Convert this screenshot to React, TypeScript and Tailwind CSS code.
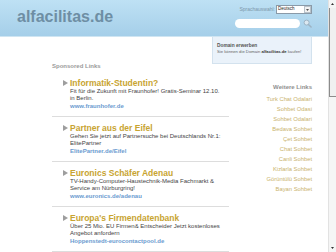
import React from "react";

const entries = [
  {
    title: "Informatik-Studentin?",
    lines: ["Fit für die Zukunft mit Fraunhofer! Gratis-Seminar 12.10.", "in Berlin."],
    url: "www.fraunhofer.de",
  },
  {
    title: "Partner aus der Eifel",
    lines: ["Gehen Sie jetzt auf Partnersuche bei Deutschlands Nr.1:", "ElitePartner"],
    url: "ElitePartner.de/Eifel",
  },
  {
    title: "Euronics Schäfer Adenau",
    lines: ["TV-Handy-Computer-Haustechnik-Media Fachmarkt &", "Service am Nürburgring!"],
    url: "www.euronics.de/adenau",
  },
  {
    title: "Europa's Firmendatenbank",
    lines: ["Über 25 Mio. EU Firmen& Entscheider Jetzt kostenloses", "Angebot anfordern"],
    url: "Hoppenstedt-eurocontactpool.de",
  },
];

const moreLinks = [
  "Turk Chat Odalari",
  "Sohbet Odasi",
  "Sohbet Odalari",
  "Bedava Sohbet",
  "Çet Sohbet",
  "Chat Sohbet",
  "Canli Sohbet",
  "Kizlarla Sohbet",
  "Görüntülü Sohbet",
  "Bayan Sohbet",
];

const Header: React.FC = () => (
  <div className="h-[42px] flex items-center justify-between pl-[17px] pr-[16px] bg-gradient-to-b from-[#bee1f4] to-[#a5cfe9] border-b border-[#cfe5f2]">
    <div className="text-[16px] font-bold text-[#6e8ea4] leading-none -mt-[1px]">alfacilitas.de</div>
    <div className="flex flex-col items-end gap-[5px] -mt-[2px]">
      <div className="flex items-center gap-[1px]">
        <span className="text-[5px] text-[#7d97aa]">Sprachauswahl:</span>
        <div className="w-[36px] h-[9px] bg-white border border-[#8a9aa8] flex items-center justify-between">
          <span className="text-[4.5px] text-[#222] pl-[1px]">Deutsch</span>
          <span className="w-[7px] h-[7px] border border-[#b8c2ca] bg-[#f2f2f2] flex items-center justify-center mr-[0.5px]">
            <svg width="3" height="2" viewBox="0 0 3 2">
              <polygon points="0,0 3,0 1.5,2" fill="#555" />
            </svg>
          </span>
        </div>
      </div>
      <div className="flex items-center gap-[3px]">
        <div className="w-[65px] h-[9px] rounded-full bg-white"></div>
        <svg width="9" height="9" viewBox="0 0 10 10">
          <circle cx="4" cy="4" r="2.8" fill="#dbe8f1" stroke="#9db3c3" strokeWidth="1.1" />
          <path d="M6 6 L9 9" stroke="#9db3c3" strokeWidth="1.6" strokeLinecap="round" />
        </svg>
      </div>
    </div>
  </div>
);

const Entry: React.FC<{ e: (typeof entries)[number] }> = ({ e }) => (
  <div className="flex pl-[11px] pt-[5.5px] pb-[6px] border-b border-[#dddddd]">
    <span className="w-[7px] h-[10px] flex items-center">
      <svg width="5" height="6" viewBox="0 0 5 6">
        <polygon points="0,0 5,3 0,6" fill="#9e9e9e" />
      </svg>
    </span>
    <div className="flex flex-col">
      <div className="text-[8.5px] leading-[10px] font-bold text-[#c8a431] whitespace-nowrap">{e.title}</div>
      {e.lines.map((l) => (
        <div key={l} className="text-[6px] leading-[7.5px] text-[#444444] whitespace-nowrap">{l}</div>
      ))}
      <div className="text-[6px] leading-[7.5px] font-bold text-[#6b9bd0] whitespace-nowrap">{e.url}</div>
    </div>
  </div>
);

const Scrollbar: React.FC = () => (
  <div className="w-[8px] h-[252px] flex flex-col bg-[#f5f5f5] border-l border-[#e2e2e2]">
    <div className="h-[8px] flex items-center justify-center">
      <svg width="3" height="2" viewBox="0 0 3 2">
        <polygon points="0,2 3,2 1.5,0" fill="#333" />
      </svg>
    </div>
    <div className="h-[89px] border-l border-b border-[#8c8c8c] bg-[#f0f0f0]"></div>
    <div className="flex-1"></div>
    <div className="h-[8px] flex items-center justify-center">
      <svg width="3" height="2" viewBox="0 0 3 2">
        <polygon points="0,0 3,0 1.5,2" fill="#333" />
      </svg>
    </div>
  </div>
);

export default function App() {
  return (
    <div className="w-[336px] h-[252px] overflow-hidden flex bg-white" style={{ fontFamily: '"Liberation Sans", Arial, sans-serif' }}>
      <div className="w-[328px] flex flex-col">
        <Header />
        <div className="flex justify-end pr-[16px]">
          <div className="w-[100px] h-[27px] bg-[#eaf2fa] border-x border-b border-[#d3e2ee] pl-[4px] pt-[5px]">
            <div className="text-[4.8px] leading-[7px] font-bold text-[#555]">Domain erwerben</div>
            <div className="text-[4.2px] leading-[6px] text-[#666] whitespace-nowrap">
              Sie können die Domain <b className="text-[#333]">alfacilitas.de</b> kaufen!
            </div>
          </div>
        </div>
        <div className="flex pl-[52px] pr-[16px]">
          <div className="w-[177px] flex flex-col">
            <div className="-mt-[1px] mb-[2px] text-[6px] leading-[7.5px] font-bold text-[#9a9a9a]">Sponsored Links</div>
            {entries.map((e) => (
              <Entry key={e.title} e={e} />
            ))}
          </div>
          <div className="flex-1 flex flex-col items-end pt-[20px]">
            <div className="text-[6px] leading-[7px] font-bold text-[#8f8f8f] mb-[3.5px]">Weitere Links</div>
            {moreLinks.map((l) => (
              <div key={l} className="text-[5.8px] leading-[10px] text-[#c9b26c] whitespace-nowrap">{l}</div>
            ))}
          </div>
        </div>
      </div>
      <Scrollbar />
    </div>
  );
}
